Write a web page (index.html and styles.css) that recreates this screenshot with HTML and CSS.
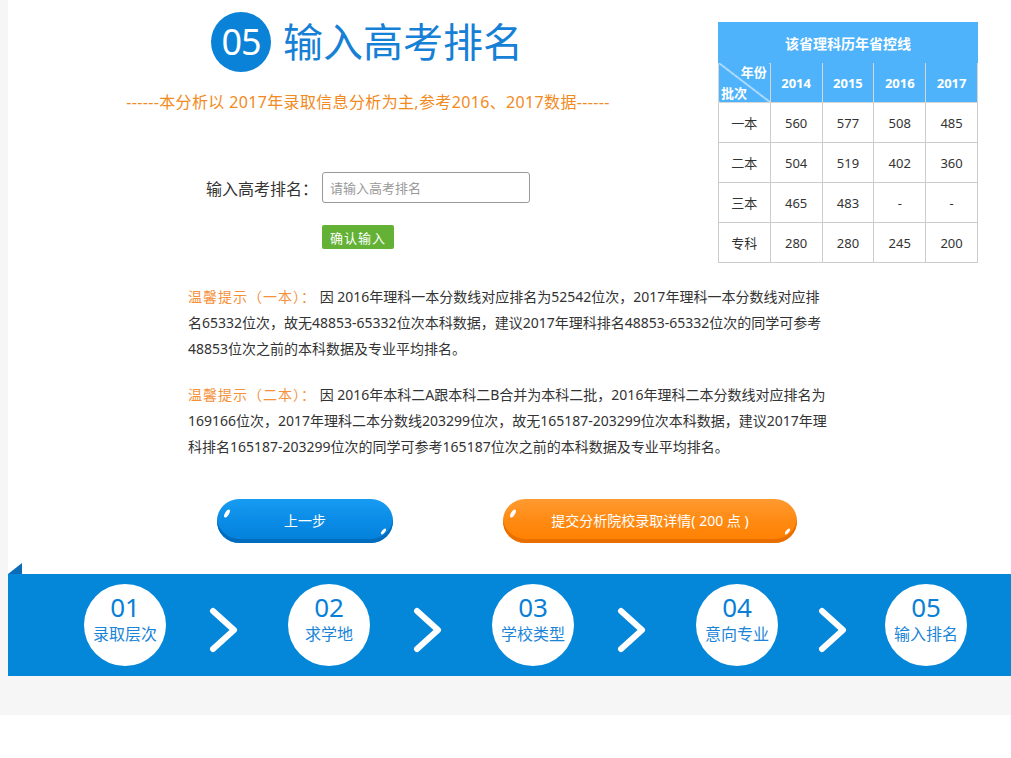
FILE: index.html
```html
<!DOCTYPE html>
<html lang="zh-CN">
<head>
<meta charset="UTF-8">
<title>输入高考排名</title>
<link rel="stylesheet" href="styles.css">
</head>
<body>
<div class="page">
    <div class="main">

        <div class="top">
            <div class="left-col">
                <div class="step-title">
                    <span class="step-num">05</span>
                    <h1>输入高考排名</h1>
                </div>
                <p class="subtitle">------本分析以 2017年录取信息分析为主,参考2016、2017数据------</p>

                <div class="rank-form">
                    <div class="form-row">
                        <label for="rank">输入高考排名：</label>
                        <input type="text" id="rank" placeholder="请输入高考排名">
                    </div>
                    <div class="form-row btn-row">
                        <button class="btn-ok">确认输入</button>
                    </div>
                </div>
            </div>

            <!-- 省控线 -->
            <table class="score-table">
                <tr>
                    <th colspan="5" class="table-title">该省理科历年省控线</th>
                </tr>
                <tr>
                    <th class="diag">
                        <div class="diag-inner">
                            <span class="diag-year">年份</span>
                            <span class="diag-batch">批次</span>
                        </div>
                    </th>
                    <th>2014</th>
                    <th>2015</th>
                    <th>2016</th>
                    <th>2017</th>
                </tr>
                <tr><td>一本</td><td>560</td><td>577</td><td>508</td><td>485</td></tr>
                <tr><td>二本</td><td>504</td><td>519</td><td>402</td><td>360</td></tr>
                <tr><td>三本</td><td>465</td><td>483</td><td>-</td><td>-</td></tr>
                <tr><td>专科</td><td>280</td><td>280</td><td>245</td><td>200</td></tr>
            </table>
        </div>

        <div class="tips">
            <p><span class="tip-label">温馨提示（一本）：</span> 因 2016年理科一本分数线对应排名为52542位次，2017年理科一本分数线对应排名65332位次，故无48853-65332位次本科数据，建议2017年理科排名48853-65332位次的同学可参考48853位次之前的本科数据及专业平均排名。</p>
            <p><span class="tip-label">温馨提示（二本）：</span> 因 2016年本科二A跟本科二B合并为本科二批，2016年理科二本分数线对应排名为169166位次，2017年理科二本分数线203299位次，故无165187-203299位次本科数据，建议2017年理科排名165187-203299位次的同学可参考165187位次之前的本科数据及专业平均排名。</p>
        </div>

        <div class="actions">
            <a href="#" class="btn-glossy btn-prev">上一步</a>
            <a href="#" class="btn-glossy btn-submit">提交分析院校录取详情( 200 点 )</a>
        </div>

        <!-- 步骤条 -->
        <div class="steps">
            <div class="step"><span class="num">01</span><span class="name">录取层次</span></div>
            <div class="arrow">
                <svg width="30" height="46" viewBox="0 0 30 46"><polyline points="5,4 26,23 5,42" fill="none" stroke="#fff" stroke-width="6" stroke-linecap="round" stroke-linejoin="round"/></svg>
            </div>
            <div class="step"><span class="num">02</span><span class="name">求学地</span></div>
            <div class="arrow">
                <svg width="30" height="46" viewBox="0 0 30 46"><polyline points="5,4 26,23 5,42" fill="none" stroke="#fff" stroke-width="6" stroke-linecap="round" stroke-linejoin="round"/></svg>
            </div>
            <div class="step"><span class="num">03</span><span class="name">学校类型</span></div>
            <div class="arrow">
                <svg width="30" height="46" viewBox="0 0 30 46"><polyline points="5,4 26,23 5,42" fill="none" stroke="#fff" stroke-width="6" stroke-linecap="round" stroke-linejoin="round"/></svg>
            </div>
            <div class="step"><span class="num">04</span><span class="name">意向专业</span></div>
            <div class="arrow arrow-last">
                <svg width="30" height="46" viewBox="0 0 30 46"><polyline points="5,4 26,23 5,42" fill="none" stroke="#fff" stroke-width="6" stroke-linecap="round" stroke-linejoin="round"/></svg>
            </div>
            <div class="step"><span class="num">05</span><span class="name">输入排名</span></div>
        </div>
    </div>
</div>
</body>
</html>
```

FILE: styles.css
```css
body {
    margin: 0;
    padding: 0;
    background: #fff;
    font-family: "Noto Sans", "Noto Sans CJK SC", sans-serif;
    color: #333;
}

.page {
    background: #f6f6f6;
    padding: 0 0 39px 8px;
}

.main {
    background: #fff;
    width: 1003px;
}

/* top part */
.top {
    display: flex;
    align-items: flex-start;
}

.left-col {
    width: 700px;
    padding-left: 10px;
    text-align: center;
}

.step-title {
    display: flex;
    justify-content: center;
    align-items: center;
    padding-top: 12px;
    padding-right: 2px;
}

.step-num {
    width: 60px;
    height: 60px;
    border-radius: 50%;
    background: #0a82d8;
    color: #fff;
    font-size: 36px;
    line-height: 60px;
    text-align: center;
    letter-spacing: -1px;
}

.step-title h1 {
    margin: 0 0 0 12px;
    font-size: 40px;
    font-weight: normal;
    line-height: 60px;
    color: #1580d6;
}

.subtitle {
    margin: 20px 0 0;
    font-size: 16px;
    line-height: 20px;
    letter-spacing: 0.35px;
    color: #f28a22;
}

.rank-form {
    width: 324px;
    margin: 60px auto 0;
    text-align: left;
}

.form-row {
    display: flex;
    align-items: center;
}

.form-row label {
    width: 116px;
    font-size: 16px;
    color: #333;
}

.form-row input {
    width: 192px;
    height: 29px;
    padding: 0 7px;
    border: 1px solid #999;
    border-radius: 3px;
    font-family: inherit;
    font-size: 13px;
    color: #333;
    outline: none;
}

.form-row input::placeholder {
    color: #999;
}

.btn-row {
    padding-left: 116px;
    margin-top: 22px;
}

.btn-ok {
    width: 72px;
    height: 24px;
    padding: 0;
    border: none;
    border-radius: 2px;
    background: #63b236;
    color: #fff;
    font-family: inherit;
    font-size: 13px;
    letter-spacing: 1px;
    cursor: pointer;
}

/* 省控线表格 */
.score-table {
    margin-top: 22px;
    width: 260px;
    border-collapse: collapse;
    font-size: 13px;
}

.score-table th,
.score-table td {
    border: 1px solid #ccc;
    height: 39px;
    padding: 0;
    text-align: center;
}

.score-table th {
    background: #4fb3fb;
    color: #fff;
    font-weight: bold;
    border-color: #d6d6d6;
}

.score-table .table-title {
    border-color: #4fb3fb;
    height: 39px;
    font-size: 14px;
}

.score-table td {
    color: #333;
    width: 51px;
}

.score-table .diag {
    width: 51px;
    background: #4fb3fb linear-gradient(to top right, transparent calc(50% - 1px), #fff, transparent calc(50% + 1px));
}

.diag-inner {
    display: flex;
    flex-direction: column;
    height: 38px;
    justify-content: space-between;
    font-weight: bold;
    line-height: 17px;
    padding: 1px 3px 0 2px;
}

.diag-year {
    align-self: flex-end;
}

.diag-batch {
    align-self: flex-start;
}

/* 温馨提示 */
.tips {
    width: 641px;
    margin: 21px 0 0 180px;
    font-size: 14px;
    line-height: 26px;
}

.tips p {
    margin: 0 0 20px;
}

.tips p:last-child {
    margin-bottom: 0;
}

.tip-label {
    color: #f5913a;
    letter-spacing: 1px;
}

/* buttons */
.actions {
    display: flex;
    gap: 110px;
    padding-left: 209px;
    margin-top: 39px;
}

.btn-glossy {
    position: relative;
    display: block;
    height: 44px;
    line-height: 44px;
    border-radius: 22px;
    color: #fff;
    font-size: 14px;
    text-align: center;
    text-decoration: none;
}

.btn-prev {
    width: 176px;
    background: linear-gradient(#189cf2, #0a8be6 50%, #0380d8);
    box-shadow: inset 0 -4px 0 #006cbd;
}

.btn-submit {
    width: 294px;
    background: linear-gradient(#ff9a30, #ff8a12 50%, #ff8000);
    box-shadow: inset 0 -4px 0 #e86e00;
}

.btn-glossy::before {
    content: "";
    position: absolute;
    top: 10px;
    left: 8px;
    width: 4px;
    height: 9px;
    border-radius: 50%;
    background: #fff;
    transform: rotate(30deg);
}

.btn-glossy::after {
    content: "";
    position: absolute;
    bottom: 8px;
    right: 8px;
    width: 3px;
    height: 7px;
    border-radius: 50%;
    background: #fff;
    transform: rotate(40deg);
}

/* steps bar */
.steps {
    position: relative;
    display: flex;
    align-items: center;
    height: 102px;
    margin-top: 31px;
    padding-left: 76px;
    background: #0486d9;
}

.steps::before {
    content: "";
    position: absolute;
    top: -11px;
    left: 0;
    border-right: 14px solid #0b6cb8;
    border-top: 11px solid transparent;
}

.step {
    width: 82px;
    height: 82px;
    border-radius: 50%;
    background: #fff;
    display: flex;
    flex-direction: column;
    align-items: center;
    padding-top: 8px;
    box-sizing: border-box;
    color: #0a7fd6;
}

.step .num {
    font-size: 26px;
    line-height: 30px;
}

.step .name {
    font-size: 16px;
    line-height: 24px;
    color: #1a84d8;
}

.arrow {
    width: 122px;
    display: flex;
    justify-content: center;
    padding: 9px 8px 0 0;
    box-sizing: border-box;
}

.arrow-last {
    width: 107px;
    padding-right: 0;
}

.arrow svg {
    display: block;
}
```
